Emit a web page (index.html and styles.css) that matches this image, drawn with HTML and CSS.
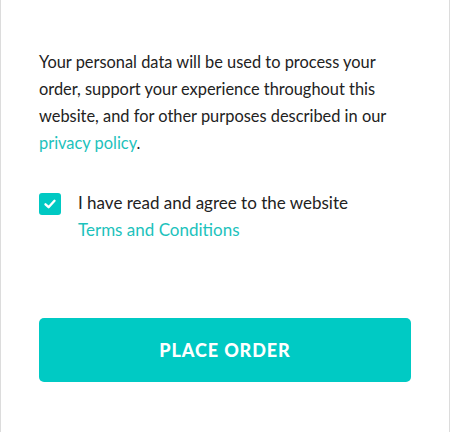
FILE: index.html
```html
<!DOCTYPE html>
<html lang="en">
<head>
    <meta charset="UTF-8">
    <meta name="viewport" content="width=device-width, initial-scale=1.0">
    <title>Checkout</title>
    <link rel="stylesheet" href="styles.css">
</head>
<body>
    <div class="order-card">
        <p class="privacy-text">
            Your personal data will be used to process your order, support your experience throughout this website, and for other purposes described in our <a href="#" class="link">privacy policy</a>.
        </p>

        <label class="terms-row">
            <span class="checkbox">
                <svg width="14" height="14" viewBox="0 0 14 14">
                    <path d="M2.5 7.3 L5.6 10.2 L11.5 3.8" fill="none" stroke="#ffffff" stroke-width="2.4" stroke-linecap="round" stroke-linejoin="round"/>
                </svg>
            </span>
            <span class="terms-text">
                I have read and agree to the website<br>
                <a href="#" class="link">Terms and Conditions</a>
            </span>
        </label>

        <button class="place-order-button">PLACE ORDER</button>
    </div>
</body>
</html>
```

FILE: styles.css
```css
body {
    margin: 0;
    background-color: #ffffff;
    font-family: Lato, "Noto Sans", sans-serif;
}

.order-card {
    width: 450px;
    height: 432px;
    box-sizing: border-box;
    border-left: 1px solid #dcdcdc;
    border-right: 1px solid #dcdcdc;
    padding: 48px 38px 0 38px;
}

.privacy-text {
    margin: 0;
    font-size: 16.4px;
    line-height: 27px;
    color: #222222;
}

.link {
    color: #1cc2bc;
    text-decoration: none;
}

.terms-row {
    display: flex;
    align-items: flex-start;
    gap: 17px;
    margin-top: 33px;
    font-size: 17px;
    line-height: 27px;
    color: #222222;
}

.checkbox {
    flex: none;
    width: 22px;
    height: 22px;
    margin-top: 4px;
    border-radius: 3px;
    background-color: #00c9c3;
    display: flex;
    align-items: center;
    justify-content: center;
}

.place-order-button {
    display: block;
    width: 100%;
    height: 64px;
    margin-top: 75px;
    border: none;
    border-radius: 5px;
    background-color: #00cac4;
    color: #ffffff;
    font-family: Lato, "Noto Sans", sans-serif;
    font-weight: 900;
    font-size: 18px;
    letter-spacing: 0.9px;
    cursor: pointer;
}
```
